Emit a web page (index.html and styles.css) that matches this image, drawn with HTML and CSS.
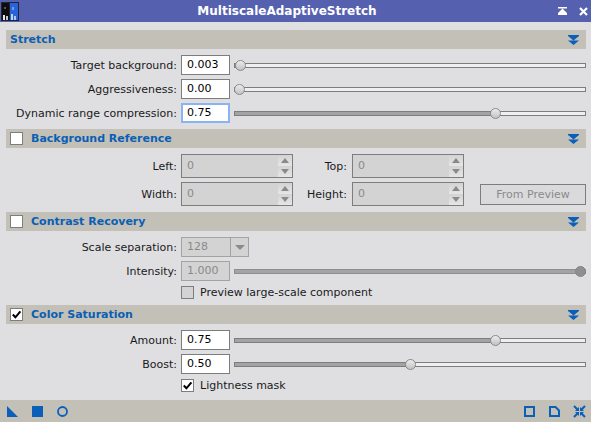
FILE: index.html
```html
<!DOCTYPE html>
<html lang="en">
<head>
<meta charset="utf-8">
<title>MultiscaleAdaptiveStretch</title>
<link rel="stylesheet" href="styles.css">
</head>
<body>
<div class="window">
  <header class="titlebar">
    <svg class="app-icon" viewBox="0 0 18 19" width="18" height="19">
      <rect width="18" height="19" fill="#20242e"/>
      <rect x="1" y="1" width="7" height="17" fill="#0c0c0e"/>
      <rect x="9" y="1" width="8" height="17" fill="#2a62d8"/>
      <rect x="2" y="13" width="2" height="5" fill="#e8e8e8"/>
      <rect x="5" y="14" width="2" height="4" fill="#c8c8c8"/>
      <rect x="3" y="5" width="2" height="2" fill="#555"/>
      <rect x="10" y="12" width="2" height="6" fill="#b9d4ff"/>
      <rect x="13" y="14" width="2" height="4" fill="#a8c8ff"/>
      <rect x="11" y="5" width="2" height="3" fill="#6f9cf0"/>
    </svg>
    <h1 class="title">MultiscaleAdaptiveStretch</h1>
    <svg class="tb-shade" viewBox="0 0 9 8" width="9" height="8"><path d="M0 0h9v1.500H0zM4.500 1.500L9 6v2H0V6z" fill="#fff"/></svg>
    <svg class="tb-close" viewBox="0 0 9 9" width="9" height="9"><path d="M1 1l7 7M8 1L1 8" stroke="#fff" stroke-width="2.200" fill="none"/></svg>
  </header>

  <main class="content">
    <section class="bar">
      <span class="bar-title">Stretch</span>
      <svg class="collapse" viewBox="0 0 11 10" width="11" height="10"><path d="M0 0h11v1H0zM0 1h11L5.500 5.500zM0 5.500h11L5.500 10z" fill="#0a5fb8"/></svg>
    </section>
    <div class="rows">
      <div class="row"><label class="lbl">Target background:</label><span class="edit">0.003</span>
        <div class="slider" style="--v:0.003"><i class="fill"></i><i class="knob"></i></div></div>
      <div class="row"><label class="lbl">Aggressiveness:</label><span class="edit">0.00</span>
        <div class="slider" style="--v:0"><i class="fill"></i><i class="knob"></i></div></div>
      <div class="row"><label class="lbl">Dynamic range compression:</label><span class="edit focus">0.75</span>
        <div class="slider" style="--v:0.75"><i class="fill"></i><i class="knob"></i></div></div>
    </div>

    <section class="bar">
      <span class="check"></span><span class="bar-title">Background Reference</span>
      <svg class="collapse" viewBox="0 0 11 10" width="11" height="10"><path d="M0 0h11v1H0zM0 1h11L5.500 5.500zM0 5.500h11L5.500 10z" fill="#0a5fb8"/></svg>
    </section>
    <div class="rows spins">
      <div class="row"><label class="lbl">Left:</label>
        <span class="spin"><span class="spin-val">0</span><span class="arrows"><i class="up"></i><i class="down"></i></span></span>
        <label class="lbl2">Top:</label>
        <span class="spin"><span class="spin-val">0</span><span class="arrows"><i class="up"></i><i class="down"></i></span></span>
      </div>
      <div class="row"><label class="lbl">Width:</label>
        <span class="spin"><span class="spin-val">0</span><span class="arrows"><i class="up"></i><i class="down"></i></span></span>
        <label class="lbl2">Height:</label>
        <span class="spin"><span class="spin-val">0</span><span class="arrows"><i class="up"></i><i class="down"></i></span></span>
        <button class="btn" disabled>From Preview</button>
      </div>
    </div>

    <section class="bar">
      <span class="check"></span><span class="bar-title">Contrast Recovery</span>
      <svg class="collapse" viewBox="0 0 11 10" width="11" height="10"><path d="M0 0h11v1H0zM0 1h11L5.500 5.500zM0 5.500h11L5.500 10z" fill="#0a5fb8"/></svg>
    </section>
    <div class="rows">
      <div class="row"><label class="lbl">Scale separation:</label>
        <span class="combo"><span class="combo-val">128</span><span class="combo-arrow"><i></i></span></span></div>
      <div class="row"><label class="lbl">Intensity:</label><span class="edit off">1.000</span>
        <div class="slider disabled" style="--v:1"><i class="fill"></i><i class="knob"></i></div></div>
      <div class="row opt"><span class="check off"></span><span class="opt-text">Preview large-scale component</span></div>
    </div>

    <section class="bar">
      <span class="check"><svg viewBox="0 0 11 11" width="11" height="11"><path d="M1.800 5.500l2.600 2.800 5-6" stroke="#000" stroke-width="2" fill="none"/></svg></span><span class="bar-title">Color Saturation</span>
      <svg class="collapse" viewBox="0 0 11 10" width="11" height="10"><path d="M0 0h11v1H0zM0 1h11L5.500 5.500zM0 5.500h11L5.500 10z" fill="#0a5fb8"/></svg>
    </section>
    <div class="rows">
      <div class="row"><label class="lbl">Amount:</label><span class="edit">0.75</span>
        <div class="slider" style="--v:0.75"><i class="fill"></i><i class="knob"></i></div></div>
      <div class="row"><label class="lbl">Boost:</label><span class="edit">0.50</span>
        <div class="slider" style="--v:0.5"><i class="fill"></i><i class="knob"></i></div></div>
      <div class="row opt"><span class="check"><svg viewBox="0 0 11 11" width="11" height="11"><path d="M1.800 5.500l2.600 2.800 5-6" stroke="#000" stroke-width="2" fill="none"/></svg></span><span class="opt-text">Lightness mask</span></div>
    </div>
  </main>

  <footer class="toolbar">
    <svg class="ti" viewBox="0 0 11 11" width="11" height="11"><path d="M0 0L11 11H0z" fill="#0a5fb8"/></svg>
    <svg class="ti" viewBox="0 0 11 11" width="11" height="11"><rect width="11" height="11" fill="#0a5fb8"/></svg>
    <svg class="ti" viewBox="0 0 11 11" width="11" height="11"><circle cx="5.500" cy="5.500" r="4.500" stroke="#0a5fb8" stroke-width="1.800" fill="none"/></svg>
    <span class="spacer"></span>
    <svg class="ti" viewBox="0 0 11 11" width="11" height="11"><rect x="1" y="1" width="9" height="9" stroke="#0a5fb8" stroke-width="2" fill="none"/></svg>
    <svg class="ti" viewBox="0 0 11 11" width="11" height="11"><path d="M1 1h5.500L10 4.500V10H1z" stroke="#0a5fb8" stroke-width="2" fill="none"/></svg>
    <svg class="ti last" viewBox="0 0 13 13" width="13" height="13"><path d="M1 1l3.500 3.500M12 1L8.500 4.500M1 12l3.500-3.500M12 12L8.500 8.500" stroke="#0a5fb8" stroke-width="2" fill="none"/><path d="M2 6h4V2zM11 6H7V2zM2 7h4v4zM11 7H7v4z" fill="#0a5fb8"/></svg>
  </footer>
</div>
</body>
</html>
```
FILE: styles.css
```css
* { box-sizing: border-box; }
html, body { margin: 0; padding: 0; }
body {
  width: 591px;
  height: 422px;
  overflow: hidden;
  background: #dfdfe2;
  font-family: "DejaVu Sans", sans-serif;
  font-size: 11px;
  color: #1a1a1a;
}
.window { display: flex; flex-direction: column; height: 422px; }

.titlebar {
  height: 22px;
  flex: none;
  background: #5561ae;
  display: flex;
  align-items: center;
  padding: 0 3px 0 1px;
}
.app-icon { flex: none; }
.title {
  flex: 1;
  margin: 0;
  padding-left: 0;
  padding-right: 3px;
  text-align: center;
  font-size: 12px;
  font-weight: bold;
  color: #fff;
}
.tb-shade { flex: none; margin-right: 12px; }
.tb-close { flex: none; }

.content {
  flex: 1;
  padding: 8px 5px 0 6px;
  display: flex;
  flex-direction: column;
}
.bar {
  height: 19px;
  flex: none;
  background: #c3c0b8;
  display: flex;
  align-items: center;
  padding-left: 4px;
  padding-right: 7px;
}
.bar-title { font-weight: bold; color: #0a5fb4; font-size: 11px; }
.check + .bar-title { margin-left: 8px; }
.collapse { margin-left: auto; }

.check {
  width: 13px;
  height: 13px;
  flex: none;
  background: #fff;
  border: 1px solid #7d7d7d;
  display: flex;
  align-items: center;
  justify-content: center;
}
.check.off { background: #d3d3d3; }
.check svg { display: block; flex: none; }

.rows {
  display: flex;
  flex-direction: column;
  gap: 4px;
  padding: 6px 0;
}
.row { display: flex; align-items: center; height: 20px; }
.spins .row { height: 24px; }
.row.opt { height: 14px; padding-left: 175px; }
.lbl {
  width: 171px;
  flex: none;
  text-align: right;
  margin-right: 4px;
}
.lbl2 {
  width: 54px;
  flex: none;
  text-align: right;
  margin-right: 5px;
}
.opt-text { margin-left: 6px; }

.edit {
  width: 49px;
  height: 20px;
  flex: none;
  background: #fff;
  border: 1px solid #7d7d7d;
  padding-left: 5px;
  line-height: 18px;
  color: #000;
}
.edit.focus { border: 1px solid #8ab4f0; box-shadow: inset 0 0 0 1px #8ab4f0; }
.edit.off { background: #d3d3d3; border-color: #a3a3a3; color: #8a8a8a; }

.slider {
  position: relative;
  flex: 1;
  height: 5px;
  margin-left: 4px;
  background: #efefef;
  border: 1px solid #7d7d7d;
}
.fill {
  position: absolute;
  left: 0;
  top: 0;
  bottom: 0;
  width: calc(4.5px + var(--v) * (100% - 9px));
  background: #a3a3a3;
}
.knob {
  position: absolute;
  top: -4px;
  left: calc(-1px + var(--v) * (100% - 9px));
  width: 11px;
  height: 11px;
  border-radius: 50%;
  border: 1px solid #8a8a8a;
  background: linear-gradient(#ececec, #c2c2c2);
}
.slider.disabled { border-color: #8e8e8e; }
.slider.disabled .knob { background: #8f8f8f; border-color: #858585; }

.spin {
  width: 112px;
  height: 24px;
  flex: none;
  display: flex;
  background: #d3d3d3;
  border: 1px solid #7d7d7d;
  color: #8a8a8a;
}
.spin-val { flex: 1; padding-left: 5px; line-height: 22px; }
.arrows { width: 14px; display: flex; flex-direction: column; }
.arrows i {
  flex: 1;
  display: flex;
  align-items: center;
  justify-content: center;
  background: linear-gradient(#d3d3d3, #e6e6e6);
}
.arrows i::before {
  content: "";
  border-left: 4px solid transparent;
  border-right: 4px solid transparent;
}
.arrows .up::before { border-bottom: 5px solid #8a8a8a; }
.arrows .down::before { border-top: 5px solid #8a8a8a; }

.btn {
  margin-left: auto;
  width: 106px;
  height: 21px;
  margin-top: 1px;
  padding: 0;
  background: #dadadc;
  border: 1px solid #7d7d7d;
  font: inherit;
  color: #8a8a8a;
}

.combo {
  width: 68px;
  height: 20px;
  flex: none;
  display: flex;
  background: #d3d3d3;
  border: 1px solid #a3a3a3;
  color: #8a8a8a;
}
.combo-val { flex: 1; padding-left: 5px; line-height: 18px; }
.combo-arrow {
  width: 18px;
  border-left: 1px solid #a3a3a3;
  display: flex;
  align-items: center;
  justify-content: center;
}
.combo-arrow i {
  border-left: 5px solid transparent;
  border-right: 5px solid transparent;
  border-top: 5px solid #8a8a8a;
}

.toolbar {
  height: 22px;
  flex: none;
  background: #c3c0b8;
  display: flex;
  align-items: center;
  padding: 0 5px 0 7px;
  gap: 14px;
}
.spacer { flex: 1; }
.ti { flex: none; display: block; }
.ti.last { margin-left: -1px; }
```
